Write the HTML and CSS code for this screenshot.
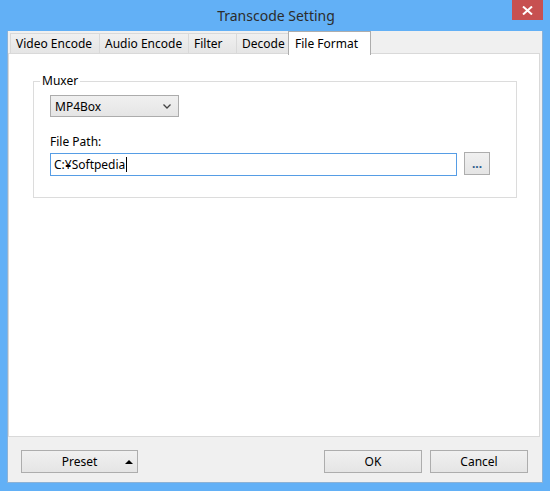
FILE: index.html
```html
<!DOCTYPE html>
<html lang="en">
<head>
  <meta charset="UTF-8">
  <title>Transcode Setting</title>
  <link rel="stylesheet" href="styles.css">
</head>
<body>
  <div class="window">
    <div class="titlebar">
      <span class="title">Transcode Setting</span>
      <button class="close" type="button">
        <svg width="11" height="9" viewBox="0 0 11 9"><path d="M1 0.5 L10 8.5 M10 0.5 L1 8.5" stroke="#fff" stroke-width="2"/></svg>
      </button>
    </div>

    <div class="client">
      <div class="tabs">
        <div class="tab tab-video">Video Encode</div>
        <div class="tab tab-audio">Audio Encode</div>
        <div class="tab tab-filter">Filter</div>
        <div class="tab tab-decode">Decode</div>
        <div class="tab tab-format active">File Format</div>
      </div>

      <div class="panel">
        <fieldset class="group">
          <legend>Muxer</legend>
          <div class="select">
            <span>MP4Box</span>
            <svg width="8" height="5" viewBox="0 0 8 5"><path d="M0.5 0.5 L4 4 L7.5 0.5" fill="none" stroke="#444" stroke-width="1.3"/></svg>
          </div>
          <label class="path-label" for="path">File Path:</label>
          <div class="path-row">
            <div class="input" id="path">C:¥Softpedia<span class="caret"></span></div>
            <button class="btn browse" type="button">...</button>
          </div>
        </fieldset>
      </div>

      <div class="footer">
        <button class="btn preset" type="button">
          <span>Preset</span>
          <svg width="8" height="4" viewBox="0 0 8 4"><path d="M0 4 L4 0 L8 4 Z" fill="#000"/></svg>
        </button>
        <div class="spacer"></div>
        <button class="btn action" type="button">OK</button>
        <button class="btn action" type="button">Cancel</button>
      </div>
    </div>
  </div>
</body>
</html>
```

FILE: styles.css
```css
body {
  margin: 0;
  padding: 0;
  font-family: "Noto Sans", "Open Sans", sans-serif;
  font-size: 12px;
  color: #000;
  background: #62b0f6;
}

.window {
  width: 550px;
  height: 491px;
  background: #62b0f6;
  display: flex;
  flex-direction: column;
}

.titlebar {
  height: 31px;
  position: relative;
  display: flex;
  justify-content: center;
}

.title {
  font-size: 14px;
  color: #2c2c2c;
  line-height: 31px;
  margin-left: 2px;
}

.close {
  position: absolute;
  top: 0;
  right: 7px;
  width: 31px;
  height: 20px;
  border: none;
  padding: 0;
  background: #c75050;
  display: flex;
  align-items: center;
  justify-content: center;
}

.client {
  margin: 0 7px 8px 7px;
  height: 451px;
  background: #f0f0f0;
  border-left: 1px solid #8cb2d6;
  border-right: 1px solid #8cb2d6;
  border-bottom: 1px solid #8cb2d6;
  padding-right: 2px;
  display: flex;
  flex-direction: column;
}

/* tabs */
.tabs {
  display: flex;
  height: 22px;
  padding-left: 2px;
  position: relative;
  z-index: 1;
}

.tab {
  box-sizing: border-box;
  height: 20px;
  margin-top: 2px;
  margin-right: -1px;
  padding-left: 5px;
  line-height: 19px;
  border: 1px solid #d9d9d9;
  border-bottom: none;
  background: linear-gradient(#f0f0f0, #e5e5e5);
  white-space: nowrap;
}

.tab-video { width: 90px; }
.tab-audio { width: 90px; }
.tab-filter { width: 49px; }
.tab-decode { width: 54px; }

.tab.active {
  width: 83px;
  height: 24px;
  margin-top: 0;
  margin-left: -1px;
  padding-left: 6px;
  line-height: 23px;
  background: #fff;
  border-color: #adadad;
}

.panel {
  box-sizing: border-box;
  height: 384px;
  background: #fff;
  border: 1px solid #d9d9d9;
  padding: 19px 22px 0 24px;
}

/* group box */
.group {
  box-sizing: border-box;
  margin: 0;
  height: 125px;
  border: 1px solid #dcdcdc;
  padding: 6px 16px 0 16px;
}

.group legend {
  padding: 0 2px;
  margin-left: -10px;
  line-height: 16px;
}

.select {
  width: 129px;
  height: 22px;
  box-sizing: border-box;
  border: 1px solid #acacac;
  background: linear-gradient(#f0f0f0, #e5e5e5);
  display: flex;
  align-items: center;
  justify-content: space-between;
  padding: 0 7px 0 4px;
}

.path-label {
  display: block;
  margin-top: 17px;
  line-height: 16px;
}

.path-row {
  display: flex;
  align-items: flex-start;
  margin-top: 3px;
  gap: 7px;
}

.input {
  width: 407px;
  height: 23px;
  box-sizing: border-box;
  border: 1px solid #569de5;
  background: #fff;
  padding-left: 3px;
  line-height: 21px;
  display: flex;
  align-items: center;
}

.caret {
  display: inline-block;
  width: 1px;
  height: 15px;
  background: #000;
  margin-left: 1px;
}

/* buttons */
.btn {
  box-sizing: border-box;
  height: 23px;
  border: 1px solid #adadad;
  background: linear-gradient(#f0f0f0, #e5e5e5);
  font-family: inherit;
  font-size: 12px;
  color: #000;
  padding: 0;
}

.browse {
  width: 26px;
  margin-top: -1px;
  font-weight: bold;
  color: #2a5a8c;
  line-height: 18px;
}

.footer {
  display: flex;
  align-items: center;
  padding: 13px 12px 0 13px;
}

.preset {
  width: 117px;
  display: flex;
  align-items: center;
  justify-content: center;
  position: relative;
}

.preset svg {
  position: absolute;
  right: 4px;
  top: 9px;
}

.spacer {
  flex: 1;
}

.action {
  width: 98px;
  margin-left: 8px;
}
```
